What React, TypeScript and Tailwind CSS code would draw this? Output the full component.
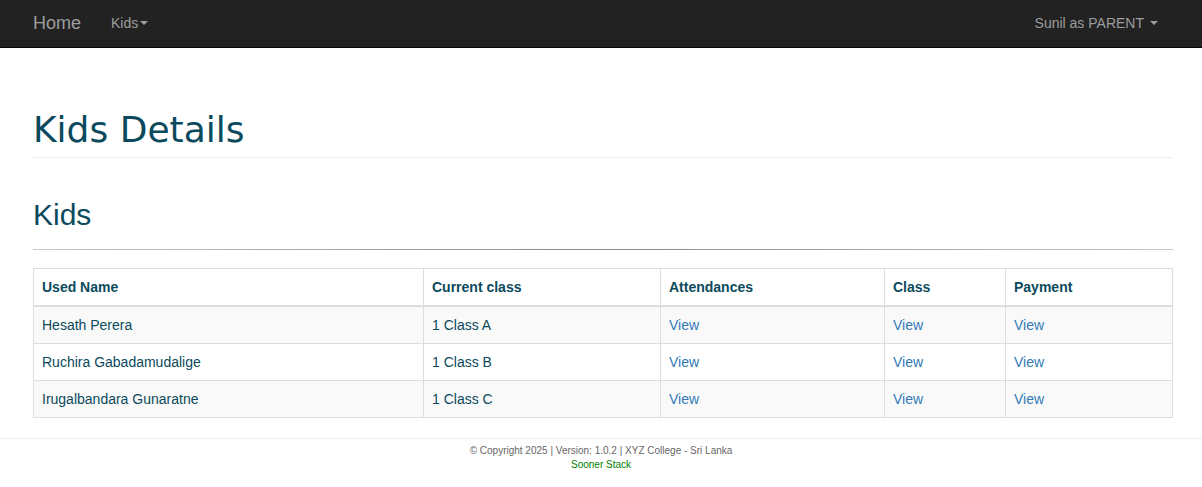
import React from "react";

const rows = [
  { name: "Hesath Perera", cls: "1 Class A" },
  { name: "Ruchira Gabadamudalige", cls: "1 Class B" },
  { name: "Irugalbandara Gunaratne", cls: "1 Class C" },
];

function Caret() {
  return (
    <span className="inline-block ml-[2px] w-0 h-0 align-middle border-t-[4px] border-t-current border-x-[4px] border-x-transparent" />
  );
}

export default function App() {
  return (
    <div className="min-h-[487px] bg-white font-['Liberation_Sans',Arial,sans-serif] text-[14px] text-[#333]">
      <nav className="h-[48px] bg-[#222] border-b border-[#080808] flex items-center justify-between pl-[33px] pr-[44px] pb-[2px] text-[#9d9d9d]">
        <div className="flex items-center">
          <span className="text-[18px] leading-[20px]">Home</span>
          <span className="ml-[30px] text-[14px] leading-[20px] flex items-center">
            Kids
            <Caret />
          </span>
        </div>
        <div className="flex items-center text-[14px] leading-[20px]">
          <span>Sunil as PARENT</span>
          <span className="ml-[4px] flex items-center">
            <Caret />
          </span>
        </div>
      </nav>

      <main className="pl-[33px] pr-[29px]">
        <h1 className="mt-[62px] pb-[7px] border-b border-[#eee] font-['DejaVu_Sans',Verdana,sans-serif] text-[36px] leading-[40px] text-[#0b4a5d]">
          Kids Details
        </h1>
        <h2 className="mt-[40px] text-[30px] leading-[33px] text-[#0b4a5d]">Kids</h2>
        <div className="mt-[18px] h-px bg-gradient-to-r from-[#c8c8c8] via-[#8a8a8a] to-[#c8c8c8]" />
        <table className="mt-[18px] w-full table-fixed border-collapse border border-[#ddd] text-[#0b4a5d]">
          <colgroup>
            <col className="w-[390px]" />
            <col className="w-[237px]" />
            <col className="w-[224px]" />
            <col className="w-[121px]" />
            <col />
          </colgroup>
          <thead>
            <tr>
              {["Used Name", "Current class", "Attendances", "Class", "Payment"].map((h) => (
                <th
                  key={h}
                  className="text-left font-bold px-[8px] py-[8px] leading-[20px] border border-[#ddd] border-b-2"
                >
                  {h}
                </th>
              ))}
            </tr>
          </thead>
          <tbody>
            {rows.map((r, i) => (
              <tr key={r.name} className={i % 2 === 0 ? "bg-[#f9f9f9]" : "bg-white"}>
                <td className="px-[8px] py-[8px] leading-[20px] border border-[#ddd]">{r.name}</td>
                <td className="px-[8px] py-[8px] leading-[20px] border border-[#ddd]">{r.cls}</td>
                <td className="px-[8px] py-[8px] leading-[20px] border border-[#ddd] text-[#337ab7]">View</td>
                <td className="px-[8px] py-[8px] leading-[20px] border border-[#ddd] text-[#337ab7]">View</td>
                <td className="px-[8px] py-[8px] leading-[20px] border border-[#ddd] text-[#337ab7]">View</td>
              </tr>
            ))}
          </tbody>
        </table>
      </main>

      <footer className="mt-[20px] border-t border-[#eee] pt-[5px] text-center text-[10px] leading-[14px]">
        <div className="text-[#666]">© Copyright 2025 | Version: 1.0.2 | XYZ College - Sri Lanka</div>
        <div className="text-[#008000]">Sooner Stack</div>
      </footer>
    </div>
  );
}
